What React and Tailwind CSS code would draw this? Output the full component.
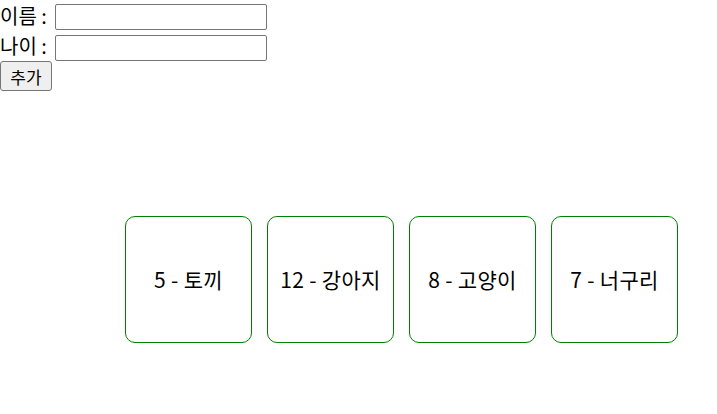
export default function App() {
  const font = { fontFamily: '"Noto Sans CJK KR", "Noto Sans", sans-serif' };
  const animals = ["5 - 토끼", "12 - 강아지", "8 - 고양이", "7 - 너구리"];
  return (
    <div className="bg-white w-[717px] h-[414px] text-black" style={font}>
      <div className="h-[31px] flex items-center text-[20px] leading-none">
        <span>이름 :</span>
        <input className="ml-[8px] mt-[3px] w-[212px] h-[26px] border border-[#767676] rounded-[2px] bg-white" />
      </div>
      <div className="h-[30px] flex items-center text-[20px] leading-none">
        <span>나이 :</span>
        <input className="ml-[8px] mt-[3px] w-[212px] h-[26px] border border-[#767676] rounded-[2px] bg-white" />
      </div>
      <div className="h-[30px] flex items-start">
        <button className="w-[52px] h-[30px] border border-[#767676] rounded-[3px] bg-[#efefef] text-[17px] leading-none flex items-center justify-center">
          추가
        </button>
      </div>
      <div className="mt-[125px] ml-[125px] flex gap-[15px]">
        {animals.map((a) => (
          <div
            key={a}
            className="w-[127px] h-[127px] border border-[#008000] rounded-[10px] flex items-center justify-center text-[21px] tracking-[0.3px]"
          >
            {a}
          </div>
        ))}
      </div>
    </div>
  );
}
